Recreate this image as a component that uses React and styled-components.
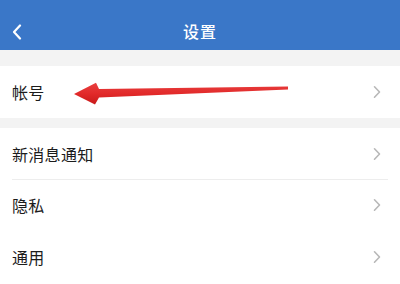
import React from 'react';
import styled, { createGlobalStyle } from 'styled-components';

const GlobalStyle = createGlobalStyle`
  html, body {
    margin: 0;
    padding: 0;
    background: #ffffff;
  }
  body {
    font-family: "Noto Sans CJK SC", "Noto Sans", sans-serif;
  }
`;

const Page = styled.div`
  width: 400px;
  height: 284px;
  overflow: hidden;
  background: #f3f3f3;
`;

const Header = styled.header`
  height: 50px;
  box-sizing: border-box;
  padding-top: 13px;
  background: #3a77c8;
  display: grid;
  grid-template-columns: 40px 1fr 40px;
  align-items: center;
`;

const BackButton = styled.div`
  height: 37px;
  display: flex;
  align-items: center;
  padding-left: 12px;
`;

const Title = styled.h1`
  margin: 0;
  text-align: center;
  color: #ffffff;
  font-size: 16px;
  font-weight: 500;
  line-height: 37px;
  letter-spacing: 1px;
`;

const Gap = styled.div`
  height: ${(p) => p.$size}px;
`;

const Group = styled.div`
  background: #ffffff;
`;

const Row = styled.div`
  position: relative;
  height: ${(p) => p.$height}px;
  display: flex;
  align-items: center;
  justify-content: space-between;
  padding: 0 18px 0 12px;
  box-sizing: border-box;

  & + &::before {
    content: '';
    position: absolute;
    top: 0;
    left: 12px;
    right: 12px;
    height: 1px;
    background: #ededed;
  }
`;

const Label = styled.span`
  font-size: 16px;
  color: #1c1c1c;
  letter-spacing: 0.3px;
`;

const Pointer = styled.svg`
  position: absolute;
  left: 0;
  top: 0;
  pointer-events: none;
`;

function Chevron() {
  return (
    <svg width="10" height="14" viewBox="0 0 10 14">
      <path
        d="M2.5 1.8 L7.5 7 L2.5 12.2"
        fill="none"
        stroke="#b8b8b8"
        strokeWidth="1.6"
        strokeLinecap="round"
        strokeLinejoin="round"
      />
    </svg>
  );
}

function RedArrow() {
  return (
    <Pointer width="400" height="52" viewBox="0 66 400 52">
      <defs>
        <linearGradient id="shaft" x1="0" y1="0" x2="0" y2="1">
          <stop offset="0" stopColor="#e84040" />
          <stop offset="0.5" stopColor="#e22a2a" />
          <stop offset="1" stopColor="#c81a1a" />
        </linearGradient>
      </defs>
      <polygon
        points="288,86.6 288,89.6 99,97.5 95,104.5 74,94 96,82.8 99,89"
        fill="url(#shaft)"
      />
    </Pointer>
  );
}

const items = [
  { label: '新消息通知', height: 51 },
  { label: '隐私', height: 51 },
  { label: '通用', height: 54 }
];

export default function App() {
  return (
    <Page>
      <GlobalStyle />
      <Header>
        <BackButton>
          <svg width="10" height="16" viewBox="0 0 10 16">
            <path
              d="M8 1.5 L2 8 L8 14.5"
              fill="none"
              stroke="#ffffff"
              strokeWidth="2.2"
              strokeLinecap="round"
              strokeLinejoin="round"
            />
          </svg>
        </BackButton>
        <Title>设置</Title>
        <div />
      </Header>

      <Gap $size={16} />

      <Group>
        <Row $height={52}>
          <Label>帐号</Label>
          <Chevron />
          <RedArrow />
        </Row>
      </Group>

      <Gap $size={10} />

      <Group>
        {items.map((item) => (
          <Row key={item.label} $height={item.height}>
            <Label>{item.label}</Label>
            <Chevron />
          </Row>
        ))}
      </Group>
    </Page>
  );
}
